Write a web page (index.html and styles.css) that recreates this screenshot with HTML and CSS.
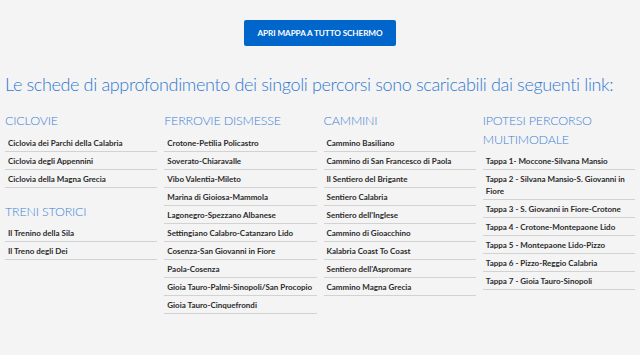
FILE: index.html
```html
<!DOCTYPE html>
<html lang="it">
<head>
<meta charset="utf-8">
<link rel="stylesheet" href="styles.css">
</head>
<body>
<main class="page">
  <div class="actions">
    <a class="btn" href="#">APRI MAPPA A TUTTO SCHERMO</a>
  </div>
  <h2 class="lead">Le schede di approfondimento dei singoli percorsi sono scaricabili dai seguenti link:</h2>
  <div class="grid">
    <section class="col">
      <h3 class="title">CICLOVIE</h3>
      <ul class="list">
        <li>Ciclovia dei Parchi della Calabria</li>
        <li>Ciclovia degli Appennini</li>
        <li>Ciclovia della Magna Grecia</li>
      </ul>
      <h3 class="title title-gap">TRENI STORICI</h3>
      <ul class="list">
        <li>Il Trenino della Sila</li>
        <li>Il Treno degli Dei</li>
      </ul>
    </section>
    <section class="col">
      <h3 class="title">FERROVIE DISMESSE</h3>
      <ul class="list">
        <li>Crotone-Petilia Policastro</li>
        <li>Soverato-Chiaravalle</li>
        <li>Vibo Valentia-Mileto</li>
        <li>Marina di Gioiosa-Mammola</li>
        <li>Lagonegro-Spezzano Albanese</li>
        <li>Settingiano Calabro-Catanzaro Lido</li>
        <li>Cosenza-San Giovanni in Fiore</li>
        <li>Paola-Cosenza</li>
        <li>Gioia Tauro-Palmi-Sinopoli/San Procopio</li>
        <li>Gioia Tauro-Cinquefrondi</li>
      </ul>
    </section>
    <section class="col">
      <h3 class="title">CAMMINI</h3>
      <ul class="list">
        <li>Cammino Basiliano</li>
        <li>Cammino di San Francesco di Paola</li>
        <li>Il Sentiero del Brigante</li>
        <li>Sentiero Calabria</li>
        <li>Sentiero dell'Inglese</li>
        <li>Cammino di Gioacchino</li>
        <li>Kalabria Coast To Coast</li>
        <li>Sentiero dell'Aspromare</li>
        <li>Cammino Magna Grecia</li>
      </ul>
    </section>
    <section class="col">
      <h3 class="title">IPOTESI PERCORSO MULTIMODALE</h3>
      <ul class="list">
        <li>Tappa 1- Moccone-Silvana Mansio</li>
        <li>Tappa 2 - Silvana Mansio-S. Giovanni in Fiore</li>
        <li>Tappa 3 - S. Giovanni in Fiore-Crotone</li>
        <li>Tappa 4 - Crotone-Montepaone Lido</li>
        <li>Tappa 5 - Montepaone Lido-Pizzo</li>
        <li>Tappa 6 - Pizzo-Reggio Calabria</li>
        <li>Tappa 7 - Gioia Tauro-Sinopoli</li>
      </ul>
    </section>
  </div>
</main>
</body>
</html>
```

FILE: styles.css
```css
html, body {
  margin: 0;
  padding: 0;
  background: #f4f4f4;
  font-family: "Lato", "Open Sans", sans-serif;
}
.page {
  padding: 20px 5px 0 5px;
}
.actions {
  display: flex;
  justify-content: center;
}
.btn {
  display: block;
  width: 152px;
  height: 26px;
  line-height: 26px;
  box-sizing: border-box;
  background: #0066cc;
  color: #ffffff;
  border-radius: 2px;
  text-align: center;
  text-decoration: none;
  font-size: 8.2px;
  font-weight: 700;
  letter-spacing: -0.1px;
}
.lead {
  margin: 26px 0 0 0;
  font-weight: 300;
  font-size: 18px;
  line-height: 24px;
  color: #3079d2;
  letter-spacing: -0.35px;
  white-space: nowrap;
}
.grid {
  display: grid;
  grid-template-columns: repeat(4, 1fr);
  column-gap: 7px;
  margin-top: 16px;
}
.title {
  margin: 0 0 3px 0;
  font-weight: 300;
  font-size: 12.5px;
  line-height: 18.5px;
  color: #3d82d6;
  letter-spacing: -0.2px;
}
.title-gap {
  margin-top: 15px;
}
.list {
  list-style: none;
  margin: 0;
  padding: 0;
}
.list li {
  padding: 3px 3px 2px 3px;
  line-height: 12px;
  font-size: 8px;
  font-weight: 700;
  color: #2b2b2b;
  border-bottom: 1px solid #d2d2d2;
}
```
